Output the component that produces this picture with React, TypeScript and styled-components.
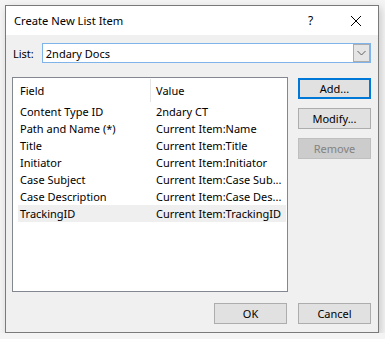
import React from "react";
import styled, { createGlobalStyle } from "styled-components";

const GlobalStyle = createGlobalStyle`
    html, body {
        margin: 0;
        padding: 0;
        background: #f4f4f4;
        font-family: "Noto Sans", "Open Sans", sans-serif;
        font-size: 11px;
        color: #000000;
    }
`

const Dialog = styled.div`
    margin: 5px 0 0 5px;
    width: 374px;
    height: 328px;
    box-sizing: border-box;
    border: 1px solid #7a7a7a;
    background: #f0f0f0;
    box-shadow: 2px 3px 8px rgba(0, 0, 0, 0.18);
    display: flex;
    flex-direction: column;
`
const TitleBar = styled.div`
    height: 29px;
    background: #ffffff;
    display: flex;
    align-items: center;
    padding-left: 8px;
`
const Title = styled.div`
    flex: 1;
    font-size: 11.2px;
`
const TitleButton = styled.div`
    width: 45px;
    height: 29px;
    display: flex;
    align-items: center;
    justify-content: center;
    font-size: 12px;
`
const Body = styled.div`
    flex: 1;
    padding: 8px 7px 9px 6px;
    display: flex;
    flex-direction: column;
`
const ListRow = styled.div`
    display: flex;
    align-items: center;
    gap: 8px;
    padding-left: 1px;
`
const Label = styled.span`
    font-size: 11px;
`
const Combo = styled.div`
    flex: 1;
    height: 20px;
    box-sizing: border-box;
    border: 1px solid #7eb4ea;
    background: #ffffff;
    display: flex;
    align-items: center;
    padding: 0 0 0 3px;
`
const ComboText = styled.div`
    flex: 1;
`
const ComboArrow = styled.div`
    width: 17px;
    height: 18px;
    box-sizing: border-box;
    border: 1px solid #acacac;
    background: #e5e5e5;
    display: flex;
    align-items: center;
    justify-content: center;
`
const Main = styled.div`
    display: grid;
    grid-template-columns: 276px 73px;
    column-gap: 10px;
    margin-top: 14px;
    height: 215px;
`
const ListView = styled.div`
    border: 1px solid #828790;
    background: #ffffff;
    box-sizing: border-box;
    padding: 0 1px 0 5px;
    overflow: hidden;
`
const HeaderRow = styled.div`
    display: flex;
    height: 25px;
    align-items: center;
`
const Row = styled.div<{ $selected?: boolean }>`
    display: flex;
    height: 17px;
    align-items: center;
    background: ${(p) => (p.$selected ? "#efefef" : "transparent")};
`
const FieldCell = styled.div`
    width: 132px;
    padding-left: 2px;
    box-sizing: border-box;
    white-space: nowrap;
    overflow: hidden;
`
const HeaderDivider = styled.div`
    width: 1px;
    height: 23px;
    background: #e5e5e5;
`
const ValueCell = styled.div<{ $inRow?: boolean }>`
    flex: 1;
    padding-left: ${(p) => (p.$inRow ? "6px" : "5px")};
    white-space: nowrap;
    overflow: hidden;
`
const Side = styled.div`
    display: flex;
    flex-direction: column;
    gap: 9px;
    padding-top: 1px;
`
const Button = styled.div<{ $focused?: boolean; $disabled?: boolean }>`
    width: 73px;
    height: 21px;
    box-sizing: border-box;
    display: flex;
    align-items: center;
    justify-content: center;
    background: ${(p) => (p.$disabled ? "#cccccc" : "#e1e1e1")};
    color: ${(p) => (p.$disabled ? "#838383" : "#000000")};
    border: ${(p) =>
        p.$focused ? "2px solid #0078d7" : p.$disabled ? "1px solid #bfbfbf" : "1px solid #adadad"};
`
const Footer = styled.div`
    display: flex;
    justify-content: flex-end;
    gap: 11px;
    margin-top: 11px;
`

const rows = [
    ["Content Type ID", "2ndary CT"],
    ["Path and Name (*)", "Current Item:Name"],
    ["Title", "Current Item:Title"],
    ["Initiator", "Current Item:Initiator"],
    ["Case Subject", "Current Item:Case Sub..."],
    ["Case Description", "Current Item:Case Des..."],
    ["TrackingID", "Current Item:TrackingID"],
];

function App() {
    return (
        <>
            <GlobalStyle />
            <Dialog>
                <TitleBar>
                    <Title>Create New List Item</Title>
                    <TitleButton>?</TitleButton>
                    <TitleButton>
                        <svg width="12" height="12" viewBox="0 0 12 12">
                            <path d="M1 1L11 11M11 1L1 11" stroke="#000" strokeWidth="1" />
                        </svg>
                    </TitleButton>
                </TitleBar>
                <Body>
                    <ListRow>
                        <Label>List:</Label>
                        <Combo>
                            <ComboText>2ndary Docs</ComboText>
                            <ComboArrow>
                                <svg width="9" height="6" viewBox="0 0 9 6">
                                    <path d="M0.5 1L4.5 5L8.5 1" fill="none" stroke="#606060" strokeWidth="1" />
                                </svg>
                            </ComboArrow>
                        </Combo>
                    </ListRow>
                    <Main>
                        <ListView>
                            <HeaderRow>
                                <FieldCell>Field</FieldCell>
                                <HeaderDivider />
                                <ValueCell>Value</ValueCell>
                            </HeaderRow>
                            {rows.map(([field, value], i) => (
                                <Row key={field} $selected={i === rows.length - 1}>
                                    <FieldCell>{field}</FieldCell>
                                    <ValueCell $inRow>{value}</ValueCell>
                                </Row>
                            ))}
                        </ListView>
                        <Side>
                            <Button $focused>Add...</Button>
                            <Button>Modify...</Button>
                            <Button $disabled>Remove</Button>
                        </Side>
                    </Main>
                    <Footer>
                        <Button>OK</Button>
                        <Button>Cancel</Button>
                    </Footer>
                </Body>
            </Dialog>
        </>
    );
}

export default App;
